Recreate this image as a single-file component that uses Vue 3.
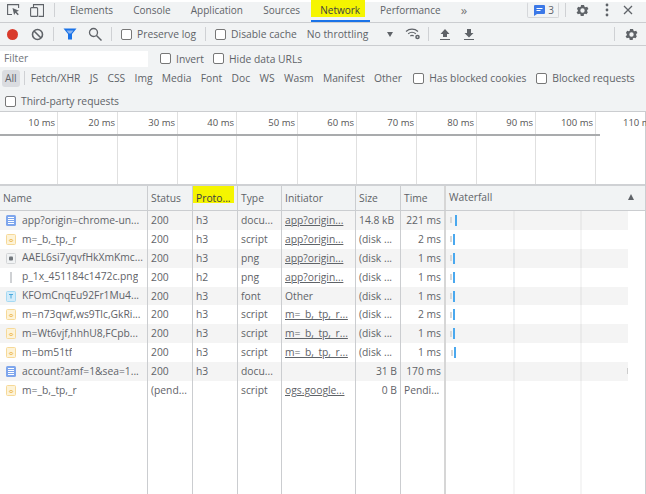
<script setup>
const tabs = ['Elements', 'Console', 'Application', 'Sources', 'Network', 'Performance']
const types = ['Fetch/XHR', 'JS', 'CSS', 'Img', 'Media', 'Font', 'Doc', 'WS', 'Wasm', 'Manifest', 'Other']
const ticks = ['10 ms', '20 ms', '30 ms', '40 ms', '50 ms', '60 ms', '70 ms', '80 ms', '90 ms', '100 ms', '110 ms']
const tickWidths = [58, 60, 60, 59, 61, 59, 60, 60, 59, 60, 50]
const rows = [
  { icon: 'doc', name: 'app?origin=chrome-un...', status: '200', proto: 'h3', type: 'docu...', init: 'app?origin...', size: '14.8 kB', time: '221 ms', bar: 4, gap: 3 },
  { icon: 'js', name: 'm=_b,_tp,_r', status: '200', proto: 'h3', type: 'script', init: 'app?origin...', size: '(disk ...', time: '2 ms', bar: 4, gap: 1 },
  { icon: 'img', name: 'AAEL6si7yqvfHkXmKmc...', status: '200', proto: 'h3', type: 'png', init: 'app?origin...', size: '(disk ...', time: '1 ms', bar: 4, gap: 1 },
  { icon: 'line', name: 'p_1x_451184c1472c.png', status: '200', proto: 'h2', type: 'png', init: 'app?origin...', size: '(disk ...', time: '1 ms', bar: 4, gap: 1 },
  { icon: 'font', name: 'KFOmCnqEu92Fr1Mu4...', status: '200', proto: 'h3', type: 'font', init: 'Other', plain: true, size: '(disk ...', time: '1 ms', bar: 4, gap: 1 },
  { icon: 'js', name: 'm=n73qwf,ws9Tlc,GkRi...', status: '200', proto: 'h3', type: 'script', init: 'm=_b,_tp,_r...', size: '(disk ...', time: '2 ms', bar: 4, gap: 1 },
  { icon: 'js', name: 'm=Wt6vjf,hhhU8,FCpb...', status: '200', proto: 'h3', type: 'script', init: 'm=_b,_tp,_r...', size: '(disk ...', time: '1 ms', bar: 4, gap: 1 },
  { icon: 'js', name: 'm=bm51tf', status: '200', proto: 'h3', type: 'script', init: 'm=_b,_tp,_r...', size: '(disk ...', time: '1 ms', bar: 5, gap: 1 },
  { icon: 'doc', name: 'account?amf=1&sea=1...', status: '200', proto: 'h3', type: 'docu...', init: '', size: '31 B', sizeRight: true, time: '170 ms', bar: 0, tail: true },
  { icon: 'js', name: 'm=_b,_tp,_r', status: '(pend...', proto: '', type: 'script', init: 'ogs.google...', size: '0 B', sizeRight: true, time: 'Pendi...', timeLeft: true, bar: 0 },
]
</script>

<template>
  <div class="devtools">
    <div class="bar tabs-bar">
      <svg class="ico inspect" width="13" height="12" viewBox="0 0 13 12"><path d="M5 10.500H.6V.6h11V4" fill="none" stroke="#5f6368" stroke-width="1.100"/><path d="M5.500 4l6.500 2.700-2.500 1 2.300 2.500-1.100 1.100-2.300-2.600-1.300 2.300z" fill="#5f6368"/></svg>
      <svg class="ico device" width="14" height="13" viewBox="0 0 14 13"><path d="M3.500 3V.6h10v11.800H8.500" fill="none" stroke="#5f6368" stroke-width="1.100"/><rect x=".6" y="3.600" width="7" height="8.800" rx="1" fill="none" stroke="#5f6368" stroke-width="1.100"/></svg>
      <span class="sep tab-sep"></span>
      <span v-for="t in tabs" :key="t" class="tab" :class="{ active: t === 'Network' }"><span class="tab-label">{{ t }}</span></span>
      <span class="more">»</span>
      <span class="issues">
        <svg width="11" height="11" viewBox="0 0 11 11"><path d="M1 0h9a1 1 0 0 1 1 1v7a1 1 0 0 1-1 1H3l-3 2V1a1 1 0 0 1 1-1z" fill="#3b78e7"/><path d="M2.500 3.500h6M2.500 5.500h4" stroke="#fff"/></svg>
        <span>3</span>
      </span>
      <span class="sep issues-sep"></span>
      <svg class="ico gear-top" width="15" height="15" viewBox="0 0 24 24"><path fill="#5f6368" d="M19.400 13a7.600 7.600 0 0 0 0-2l2.100-1.600-2-3.500-2.500 1a7.400 7.400 0 0 0-1.700-1L14.400 3.200h-4.800l-.4 2.700a7.400 7.400 0 0 0-1.700 1l-2.500-1-2 3.500L4.600 11a7.600 7.600 0 0 0 0 2l-2.100 1.600 2 3.500 2.500-1a7.400 7.400 0 0 0 1.700 1l.4 2.700h4.800l.4-2.700a7.400 7.400 0 0 0 1.700-1l2.500 1 2-3.500zM12 15.500a3.500 3.500 0 1 1 0-7 3.500 3.500 0 0 1 0 7z"/></svg>
      <svg class="ico dots" width="4" height="14" viewBox="0 0 4 14"><circle cx="2" cy="2" r="1.400" fill="#5f6368"/><circle cx="2" cy="7" r="1.400" fill="#5f6368"/><circle cx="2" cy="12" r="1.400" fill="#5f6368"/></svg>
      <svg class="ico close" width="10" height="10" viewBox="0 0 10 10"><path d="M1 1l8 8M9 1l-8 8" stroke="#5f6368" stroke-width="1.300"/></svg>
    </div>

    <div class="bar controls">
      <span class="record"></span>
      <svg class="ico clear" width="13" height="13" viewBox="0 0 13 13"><circle cx="6.500" cy="6.500" r="5" fill="none" stroke="#5f6368" stroke-width="1.600"/><path d="M3 3l7 7" stroke="#5f6368" stroke-width="1.600"/></svg>
      <span class="sep s1"></span>
      <svg class="ico funnel" width="14" height="12" viewBox="0 0 14 12"><path d="M.5.5h13L9 6v5.500H5V6z" fill="#1a73e8"/><path d="M3.500 2.500h7L8 5.500H6z" fill="#8ab4f0"/></svg>
      <svg class="ico search" width="14" height="14" viewBox="0 0 14 14"><circle cx="5.500" cy="5.500" r="4" fill="none" stroke="#5f6368" stroke-width="1.300"/><path d="M8.500 8.500l5 5" stroke="#5f6368" stroke-width="1.500"/></svg>
      <span class="sep s2"></span>
      <label class="check preserve"><i class="box"></i>Preserve log</label>
      <span class="sep s3"></span>
      <label class="check"><i class="box"></i>Disable cache</label>
      <span class="throttle">No throttling</span>
      <span class="caret"></span>
      <svg class="ico wifi" width="16" height="12" viewBox="0 0 16 12"><path d="M1 3.500a9 9 0 0 1 12 0M3.200 5.800a6 6 0 0 1 7.600 0M5.300 8a3 3 0 0 1 3.400 0" fill="none" stroke="#5f6368" stroke-width="1.200"/><circle cx="12.500" cy="9" r="2.300" fill="#5f6368"/><circle cx="12.500" cy="9" r=".8" fill="#f1f3f4"/></svg>
      <span class="sep s4"></span>
      <svg class="ico up" width="10" height="11" viewBox="0 0 10 11"><path d="M5 0l4.500 5H7v3H3V5H.5zM0 10h10v1H0z" fill="#5f6368"/></svg>
      <svg class="ico down" width="10" height="11" viewBox="0 0 10 11"><path d="M3 0h4v4h2.500L5 8.500.5 4H3zM0 10h10v1H0z" fill="#5f6368"/></svg>
      <span class="sep s5"></span>
      <svg class="ico gear-r" width="15" height="15" viewBox="0 0 24 24"><path fill="#5f6368" d="M19.400 13a7.600 7.600 0 0 0 0-2l2.100-1.600-2-3.500-2.500 1a7.400 7.400 0 0 0-1.700-1L14.400 3.200h-4.800l-.4 2.700a7.400 7.400 0 0 0-1.700 1l-2.500-1-2 3.500L4.600 11a7.600 7.600 0 0 0 0 2l-2.100 1.600 2 3.500 2.500-1a7.400 7.400 0 0 0 1.700 1l.4 2.700h4.800l.4-2.700a7.400 7.400 0 0 0 1.700-1l2.500 1 2-3.500zM12 15.500a3.500 3.500 0 1 1 0-7 3.500 3.500 0 0 1 0 7z"/></svg>
    </div>

    <div class="filters">
      <div class="f-row f1">
        <span class="filter-input">Filter</span>
        <label class="check invert"><i class="box"></i>Invert</label>
        <label class="check"><i class="box"></i>Hide data URLs</label>
      </div>
      <div class="f-row f2">
        <span class="all">All</span>
        <span class="sep s6"></span>
        <span v-for="t in types" :key="t" class="ftype">{{ t }}</span>
        <label class="check blocked"><i class="box"></i>Has blocked cookies</label>
        <label class="check"><i class="box"></i>Blocked requests</label>
      </div>
      <div class="f-row f3">
        <label class="check"><i class="box"></i>Third-party requests</label>
      </div>
    </div>

    <div class="overview">
      <div class="ticks">
        <span v-for="(t, i) in ticks" :key="t" class="tick" :class="{ last: i === 10 }" :style="{ width: tickWidths[i] + 'px' }">{{ t }}</span>
      </div>
      <div class="rule"></div>
      <div class="graph">
        <span v-for="(t, i) in ticks" :key="t" class="slot" :class="{ last: i === 10 }" :style="{ width: tickWidths[i] + 'px' }"></span>
      </div>
    </div>

    <div class="grid-row head">
      <span class="c">Name</span>
      <span class="c">Status</span>
      <span class="c"><mark>Proto...</mark></span>
      <span class="c">Type</span>
      <span class="c">Initiator</span>
      <span class="c">Size</span>
      <span class="c">Time</span>
      <span class="c wf-head">Waterfall<i class="sort"></i></span>
    </div>

    <div class="rows">
      <div class="wf-lines"></div>
      <div v-for="(r, i) in rows" :key="i" class="grid-row row" :class="{ odd: i % 2 === 0 }">
        <span class="c name">
          <svg v-if="r.icon === 'doc'" width="10" height="11" viewBox="0 0 10 11"><rect width="10" height="11" rx="1.500" fill="#7fa6ec"/><path d="M2 2.500h6M2 4.500h6M2 6.500h6M2 8.500h6" stroke="#fff"/></svg>
          <svg v-else-if="r.icon === 'js'" width="10" height="11" viewBox="0 0 10 11"><rect x=".5" y=".5" width="9" height="10" rx="1" fill="#fdf3d8" stroke="#f6d998"/><ellipse cx="5" cy="6.500" rx="1.700" ry="1" fill="none" stroke="#efbd5e"/></svg>
          <svg v-else-if="r.icon === 'img'" width="10" height="11" viewBox="0 0 10 11"><rect x=".5" y=".5" width="9" height="10" rx="1" fill="#f1f3f4" stroke="#d2d4d6"/><rect x="3" y="3.500" width="4" height="4" rx="1" fill="#70757a"/></svg>
          <svg v-else-if="r.icon === 'line'" width="10" height="11" viewBox="0 0 10 11"><rect x="4" width="2" height="11" fill="#cfd1d4"/></svg>
          <svg v-else width="10" height="11" viewBox="0 0 10 11"><rect x=".5" y=".5" width="9" height="10" rx="1" fill="#d3ecfa" stroke="#a5d9f3"/><path d="M3 3.500h4M5 3.500v4" stroke="#4aa8dc"/></svg>
          <span class="txt">{{ r.name }}</span>
        </span>
        <span class="c">{{ r.status }}</span>
        <span class="c">{{ r.proto }}</span>
        <span class="c">{{ r.type }}</span>
        <span class="c" :class="{ link: !r.plain }">{{ r.init }}</span>
        <span class="c" :class="{ right: r.sizeRight }">{{ r.size }}</span>
        <span class="c" :class="{ right: !r.timeLeft }">{{ r.time }}</span>
        <span class="c wf">
          <template v-if="r.bar">
            <i class="wait" :style="{ marginLeft: r.bar + 'px' }"></i><i class="recv" :style="{ marginLeft: r.gap + 'px' }"></i>
          </template>
          <i v-if="r.tail" class="tail"></i>
        </span>
      </div>
      <div class="grid-row filler">
        <span class="c" v-for="n in 7" :key="n"></span>
        <span class="c wf"></span>
      </div>
    </div>
  </div>
</template>

<style scoped>
.devtools {
  width: 646px;
  height: 494px;
  overflow: hidden;
  display: flex;
  flex-direction: column;
  background: #fff;
  font-family: "Open Sans", "Noto Sans", sans-serif;
  font-size: 10.300px;
  color: #5f6368;
}
.bar {
  display: flex;
  align-items: center;
  background: #f1f3f4;
  flex: none;
}
.ico { flex: none; display: block; }
.sep { flex: none; width: 1px; height: 14px; background: #cfd1d4; }
.tabs-bar {
  height: 20px;
  padding-bottom: 2px;
  border-bottom: 1px solid #cbcdd0;
  background: linear-gradient(#fff 0 2px, #f1f3f4 2px);
  font-size: 10px;
}
.inspect { margin-left: 7px; }
.device { margin-left: 10px; }
.tab-sep { margin: 0 15px 0 10px; }
.tab {
  height: 100%;
  display: flex;
  align-items: center;
  margin-right: 20.200px;
  position: relative;
  white-space: nowrap;
}
.tab.active {
  align-items: flex-start;
  margin-left: -9px;
  margin-right: 15px;
}
.tab.active::after {
  content: "";
  position: absolute;
  left: 0;
  right: -5px;
  bottom: -2px;
  height: 2px;
  background: #1a73e8;
}
.tab.active .tab-label {
  background: #f5f500;
  height: 17px;
  line-height: 20px;
  padding: 0 5px 0 9px;
  color: #3c4043;
}
.more { font-size: 13px; color: #777; }
.issues {
  margin-left: 60px;
  width: 32px;
  height: 16px;
  box-sizing: border-box;
  display: flex;
  align-items: center;
  gap: 3px;
  padding-left: 6px;
  border: 1px solid #d5d7da;
  border-top-color: transparent;
  border-radius: 2px;
}
.issues-sep { margin-left: 6px; }
.gear-top { margin-left: 9px; }
.dots { margin-left: 15px; }
.close { margin-left: 14px; }

.controls {
  height: 22px;
  border-bottom: 1px solid #cbcdd0;
}
.record {
  flex: none;
  width: 11px;
  height: 11px;
  margin-left: 7px;
  border-radius: 50%;
  background: #d93a2b;
}
.clear { margin-left: 13px; }
.s1 { margin-left: 9px; }
.funnel { margin-left: 9px; }
.search { margin-left: 11px; }
.s2 { margin-left: 9px; }
.check {
  display: inline-flex;
  align-items: center;
  white-space: nowrap;
  flex: none;
}
.box {
  flex: none;
  width: 9px;
  height: 9px;
  margin-right: 5px;
  border: 1px solid #777;
  border-radius: 2px;
  background: #fff;
}
.preserve { margin-left: 9px; }
.s3 { margin: 0 9px 0 9px; }
.throttle { margin-left: 10px; flex: none; width: 77px; white-space: nowrap; }
.caret {
  flex: none;
  margin-left: 3px;
  border-left: 3.500px solid transparent;
  border-right: 3.500px solid transparent;
  border-top: 5px solid #5f6368;
}
.wifi { margin-left: 12px; }
.s4 { margin-left: 7px; }
.up { margin-left: 11px; }
.down { margin-left: 14px; }
.s5 { margin-left: 140px; }
.gear-r { margin-left: 9px; }

.filters {
  flex: none;
  height: 66px;
  box-sizing: border-box;
  background: #f1f3f4;
  border-bottom: 1px solid #cbcdd0;
}
.f-row { display: flex; align-items: center; }
.f1 { height: 21px; padding-top: 2px; }
.filter-input {
  flex: none;
  width: 144px;
  height: 16px;
  line-height: 14px;
  padding-left: 4px;
  margin-right: 12px;
  background: #fff;
  color: #70757a;
}
.invert { margin-right: 9px; }
.f2 { height: 18px; }
.all {
  flex: none;
  margin-left: 2px;
  padding: 0 3px;
  height: 17px;
  line-height: 17px;
  background: #dadce0;
  border-radius: 3px;
}
.s6 { margin: 0 6px 0 4px; }
.ftype { flex: none; margin-right: 9.300px; white-space: nowrap; }
.blocked { margin: 0 10px 0 2px; }
.f3 { height: 24px; padding-top: 2px; padding-left: 5px; }

.overview { flex: none; height: 74px; display: flex; flex-direction: column; border-right: 1px solid #cbcdd0; box-sizing: border-box; }
.ticks { display: flex; height: 22px; flex: none; }
.tick {
  flex: none;
  box-sizing: border-box;
  padding: 0 2px 2px 0;
  border-right: 1px solid #e0e0e0;
  text-align: right;
  font-size: 9.500px;
  line-height: 22px;
  white-space: nowrap;
  color: #555;
}
.tick.last { border: 0; overflow: hidden; text-align: left; padding-left: 27px; }
.rule { flex: none; width: 600px; height: 2px; background: #a9abad; }
.graph { display: flex; flex: 1; border-bottom: 2px solid #cfd1d4; }
.slot { flex: none; box-sizing: border-box; border-right: 1px solid #e0e0e0; }
.slot.last { border: 0; }

.grid-row {
  display: grid;
  grid-template-columns: 148px 45px 45px 44px 74px 45px 45px 182px;
}
.c {
  box-sizing: border-box;
  min-width: 0;
  padding: 0 3px;
  overflow: hidden;
  white-space: nowrap;
  border-right: 1px solid #cbcdd0;
}
.c:nth-child(7) { border-right: 2px solid #d6d6d6; }
.c:last-child { border-right: 0; }
.head {
  flex: none;
  height: 25px;
  line-height: 24px;
  background: #f1f3f4;
  border-bottom: 1px solid #cbcdd0;
  border-right: 1px solid #cbcdd0;
  width: 646px;
  box-sizing: border-box;
  grid-template-columns: 148px 45px 45px 44px 74px 45px 45px 198px;
}
.head mark {
  display: block;
  box-sizing: border-box;
  height: 17px;
  line-height: 24px;
  margin-left: -3px;
  padding-left: 3px;
  width: 41px;
  background: #f5f500;
  color: #3c4043;
}
.wf-head { display: flex; justify-content: space-between; align-items: center; padding-right: 10px; line-height: 20px; padding-bottom: 3px; }
.sort {
  border-left: 3.500px solid transparent;
  border-right: 3.500px solid transparent;
  border-bottom: 6px solid #5f6368;
  margin-top: 1px;
}
.rows { flex: 1; display: flex; flex-direction: column; position: relative; border-right: 1px solid #cbcdd0; }
.row { width: 628px; height: 18.900px; line-height: 19.500px; flex: none; }
.row.odd { background: #f4f4f4; }
.filler { flex: 1; width: 628px; }
.name { display: flex; align-items: center; padding-left: 6px; }
.name svg { flex: none; margin-right: 6px; }
.txt { overflow: hidden; }
.right { text-align: right; }
.link { text-decoration: underline; }
.wf { display: flex; align-items: center; padding: 0; position: relative; }
.wait { flex: none; width: 2px; height: 6px; background: #d8d8d8; }
.recv { flex: none; width: 2px; height: 11px; background: #4aa8ee; }
.tail { position: absolute; right: 0; top: 6px; width: 1px; height: 6px; background: #ccc; }
.wf-lines {
  position: absolute;
  top: 0;
  bottom: 0;
  left: 513px;
  width: 69px;
  box-sizing: border-box;
  border-left: 2px solid rgba(0, 0, 0, .04);
  border-right: 2px solid rgba(0, 0, 0, .04);
  pointer-events: none;
}
</style>
